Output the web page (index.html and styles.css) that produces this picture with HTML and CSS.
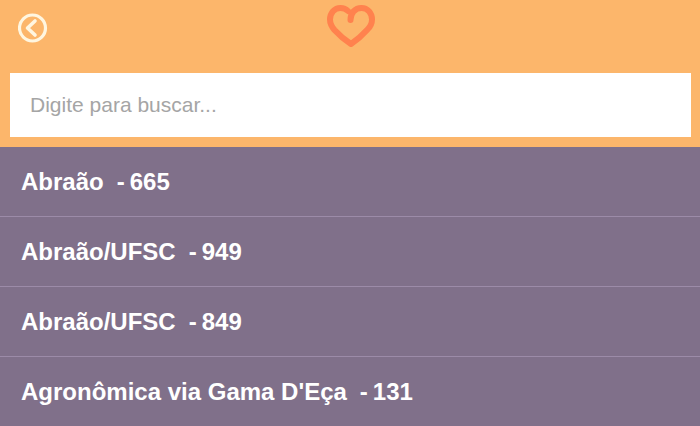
FILE: index.html
```html
<!DOCTYPE html>
<html lang="pt-BR">
<head>
<meta charset="utf-8">
<meta name="viewport" content="width=device-width, initial-scale=1">
<title>Linhas de ônibus</title>
<link rel="stylesheet" href="styles.css">
</head>
<body>
<header class="header">
  <div class="bar">
    <button class="back" type="button" aria-label="Voltar">
      <svg width="30" height="30" viewBox="0 0 30 30" fill="none" stroke="currentColor">
        <circle cx="14.500" cy="15" r="13" stroke-width="3.200"/>
        <path d="M17 8 9.500 15l7.500 7" stroke-width="3.600" stroke-linecap="round" stroke-linejoin="round"/>
      </svg>
    </button>
    <svg class="heart" width="50" height="44" viewBox="0 0 50 44" fill="none" stroke="currentColor" stroke-width="6" stroke-linecap="round" stroke-linejoin="round" aria-hidden="true">
      <path d="M24.500 16C24.500 9 29 4 35.500 4C41.500 4 46 9 46 15.500C46 19.500 44.500 22.500 41.500 25.500C37 30.500 31 36 25 40C19 36 13 31 8.500 26C5.500 22.500 4 19.500 4 15.500C4 9 8.500 4 14.500 4C17.500 4 20 5 22 7"/>
    </svg>
  </div>
  <input class="search" type="search" placeholder="Digite para buscar..." aria-label="Digite para buscar">
</header>
<main>
  <ul class="lines">
    <li><a class="line" href="#665"><span>Abraão</span><span class="code"><span>-</span><span>665</span></span></a></li>
    <li><a class="line" href="#949"><span>Abraão/UFSC</span><span class="code"><span>-</span><span>949</span></span></a></li>
    <li><a class="line" href="#849"><span>Abraão/UFSC</span><span class="code"><span>-</span><span>849</span></span></a></li>
    <li><a class="line" href="#131"><span>Agronômica via Gama D'Eça</span><span class="code"><span>-</span><span>131</span></span></a></li>
  </ul>
</main>
</body>
</html>
```
FILE: styles.css
```css
* {
  box-sizing: border-box;
}

body {
  margin: 0;
  background: #80708a;
  font-family: "Liberation Sans", Arial, sans-serif;
}

.header {
  padding: 4px 9px 10px 10px;
  background: #fcb66b;
}

.bar {
  display: grid;
  grid-template-columns: 1fr auto 1fr;
  align-items: center;
  padding: 0 8px 21px 8px;
}

.back {
  justify-self: start;
  display: flex;
  margin: 4px 0 0;
  padding: 0;
  border: 0;
  background: none;
  color: #fff6e0;
  cursor: pointer;
}

.heart {
  color: #ff824e;
}

.search {
  display: block;
  width: 100%;
  height: 64px;
  margin: 4px 0 0;
  padding: 0 20px;
  border: 0;
  border-radius: 0;
  background: #fff;
  color: #555;
  font-family: inherit;
  font-size: 21px;
  appearance: none;
}

.search::placeholder {
  color: #a5a5a5;
  opacity: 1;
}

.lines {
  margin: 0;
  padding: 0;
  list-style: none;
}

.line {
  display: flex;
  align-items: center;
  gap: 13px;
  height: 70px;
  padding: 0 21px;
  border-bottom: 1px solid #9c8ba8;
  color: #fff;
  font-size: 24px;
  font-weight: bold;
  text-decoration: none;
}

.code {
  display: flex;
  gap: 5px;
}
```
